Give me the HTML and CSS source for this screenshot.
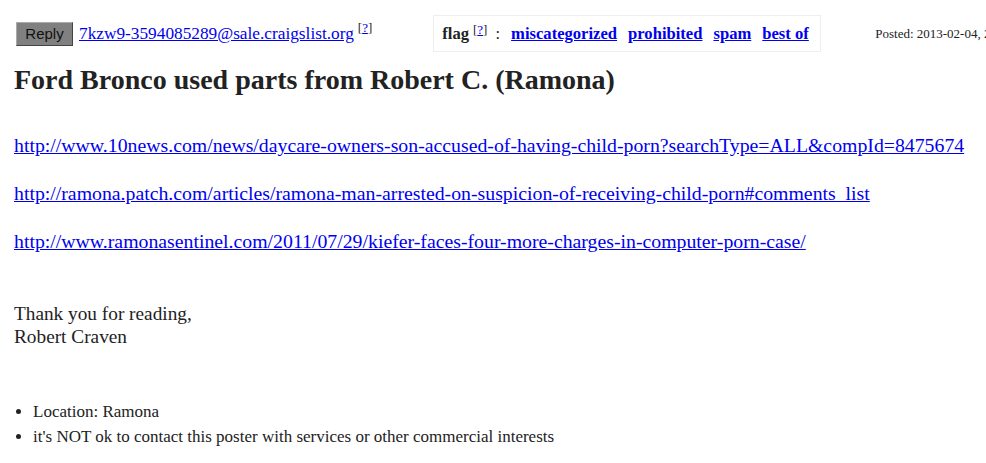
FILE: index.html
```html
<!DOCTYPE html>
<html>
<head>
<meta charset="utf-8">
<link rel="stylesheet" href="styles.css">
</head>
<body>
<div class="page">
  <div class="topbar">
    <span class="reply">Reply</span>
    <a class="email" href="#">7kzw9-3594085289@sale.craigslist.org</a>
    <sup class="help">[<a href="#">?</a>]</sup>
    <div class="flagbox">
      <b class="flag">flag</b>
      <sup class="help">[<a href="#">?</a>]</sup>
      <span class="colon">:</span>
      <a class="flink" href="#">miscategorized</a>
      <a class="flink" href="#">prohibited</a>
      <a class="flink" href="#">spam</a>
      <a class="flink" href="#">best of</a>
    </div>
    <span class="posted">Posted: 2013-02-04, 2:17PM PST</span>
  </div>
  <h2 class="title">Ford Bronco used parts from Robert C. (Ramona)</h2>
  <div class="body">
    <p class="link"><a href="#">http://www.10news.com/news/daycare-owners-son-accused-of-having-child-porn?searchType=ALL&amp;compId=8475674</a></p>
    <p class="link"><a href="#">http://ramona.patch.com/articles/ramona-man-arrested-on-suspicion-of-receiving-child-porn#comments_list</a></p>
    <p class="link"><a href="#">http://www.ramonasentinel.com/2011/07/29/kiefer-faces-four-more-charges-in-computer-porn-case/</a></p>
    <p class="sign">Thank you for reading,<br>Robert Craven</p>
  </div>
  <ul class="notes">
    <li>Location: Ramona</li>
    <li>it's NOT ok to contact this poster with services or other commercial interests</li>
  </ul>
</div>
</body>
</html>
```
FILE: styles.css
```css
html, body { margin: 0; padding: 0; background: #fff; }
body { font-family: "Liberation Serif", "Times New Roman", serif; color: #222; overflow: hidden; }
a { color: #0000ee; }
.page { width: 986px; overflow: hidden; }
.topbar { display: flex; align-items: center; white-space: nowrap; padding: 15px 0 0 16px; height: 37px; }
.topbar > * { flex-shrink: 0; }
.reply { box-sizing: border-box; height: 24px; width: 57px; background: #808080; border: 1px solid #444; border-top-color: #aaa; border-left-color: #aaa; font-family: "Liberation Sans", Arial, sans-serif; font-size: 15px; color: #111; display: flex; align-items: center; justify-content: center; }
.email { font-size: 17.3px; margin-left: 6px; }
.help { font-size: 13px; margin-left: 4px; align-self: flex-start; margin-top: 5px; }
.flagbox { box-sizing: border-box; height: 37px; width: 388px; margin-left: 61px; border: 1px solid #eee; display: flex; align-items: center; padding: 0 0 0 8px; font-weight: bold; font-size: 16.6px; }
.flagbox .help { font-weight: normal; margin-top: 6px; }
.flag { font-weight: bold; }
.colon { margin: 0 11px 0 8px; font-weight: normal; }
.flink { margin-right: 11px; }
.flink:last-child { margin-right: 0; }
.posted { margin-left: 54px; font-size: 13px; color: #222; }
.title { font-size: 28px; margin: 11px 0 0 14px; font-weight: bold; line-height: 34px; }
.body { padding-left: 14px; margin-top: 37px; font-size: 19.8px; }
.link { margin: 0 0 26px; line-height: 22px; }
.sign { margin: 49.5px 0 0; line-height: 23px; font-size: 19.3px; }
.notes { margin: 51px 0 0; padding-left: 33px; font-size: 17px; line-height: 25px; }
```
